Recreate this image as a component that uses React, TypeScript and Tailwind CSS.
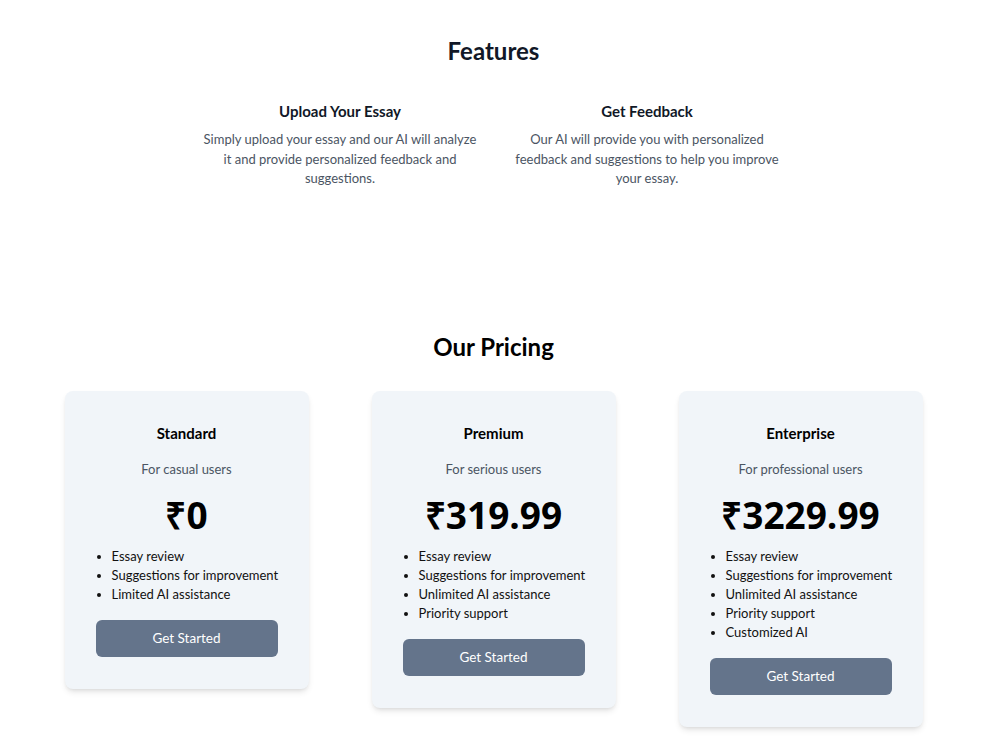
import React from "react";

type Plan = {
  name: string;
  sub: string;
  price: string;
  items: string[];
};

const plans: Plan[] = [
  {
    name: "Standard",
    sub: "For casual users",
    price: "₹0",
    items: ["Essay review", "Suggestions for improvement", "Limited AI assistance"],
  },
  {
    name: "Premium",
    sub: "For serious users",
    price: "₹319.99",
    items: [
      "Essay review",
      "Suggestions for improvement",
      "Unlimited AI assistance",
      "Priority support",
    ],
  },
  {
    name: "Enterprise",
    sub: "For professional users",
    price: "₹3229.99",
    items: [
      "Essay review",
      "Suggestions for improvement",
      "Unlimited AI assistance",
      "Priority support",
      "Customized AI",
    ],
  },
];

function Card({ p }: { p: Plan }) {
  return (
    <div className="w-[244px] rounded-lg bg-[#f1f5f9] px-[31px] pt-[32px] pb-[32px] shadow-md">
      <h3 className="text-center text-[15px] font-bold leading-[20px] text-black">{p.name}</h3>
      <p className="mt-[16px] text-center text-[13px] leading-[20px] text-[#4b5563]">{p.sub}</p>
      <p className="mt-[16px] text-center font-['Open_Sans',sans-serif] text-[37px] font-bold leading-[40px] text-black">
        {p.price}
      </p>
      <ul className="mt-[12px] list-disc pl-[16px] text-[13px] leading-[19px] text-[#111]">
        {p.items.map((it) => (
          <li key={it} className="whitespace-nowrap">{it}</li>
        ))}
      </ul>
      <button className="mt-[16px] h-[37px] w-full rounded-md bg-[#64748b] text-[13.5px] text-white">
        Get Started
      </button>
    </div>
  );
}

export default function App() {
  return (
    <div className="w-[987px] min-h-[741px] bg-white font-['Lato',sans-serif]">
      <section className="flex flex-col items-center pt-[35px]">
        <h2 className="text-[24px] font-bold leading-[32px] text-[#111827]">Features</h2>
        <div className="mt-[34px] flex gap-[27px]">
          <div className="w-[280px] text-center">
            <h3 className="text-[15px] font-bold leading-[20px] text-[#111827]">Upload Your Essay</h3>
            <p className="mt-[9px] text-[13px] leading-[19.5px] text-[#4b5563]">
              Simply upload your essay and our AI will analyze it and provide personalized feedback and
              suggestions.
            </p>
          </div>
          <div className="w-[280px] text-center">
            <h3 className="text-[15px] font-bold leading-[20px] text-[#111827]">Get Feedback</h3>
            <p className="mt-[9px] text-[13px] leading-[19.5px] text-[#4b5563]">
              Our AI will provide you with personalized feedback and suggestions to help you improve
              your essay.
            </p>
          </div>
        </div>
      </section>
      <section className="mt-[142px] flex flex-col items-center">
        <h2 className="text-[24px] font-bold leading-[32px] text-black">Our Pricing</h2>
        <div className="mt-[28px] flex items-start gap-[63px]">
          {plans.map((p) => (
            <Card key={p.name} p={p} />
          ))}
        </div>
      </section>
    </div>
  );
}
